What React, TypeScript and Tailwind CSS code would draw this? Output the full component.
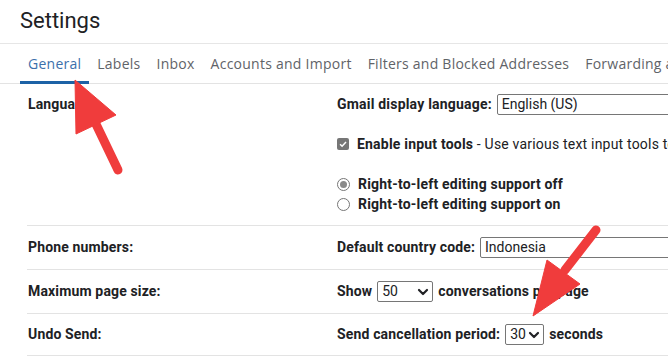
import React from "react";

const tabs = ["General", "Labels", "Inbox", "Accounts and Import", "Filters and Blocked Addresses", "Forwarding and POP/IMAP"];

function Chevron({ className }: { className?: string }) {
	return (
		<svg viewBox="0 0 12 8" className={className} fill="none" stroke="#202124" strokeWidth="2.2" strokeLinecap="round" strokeLinejoin="round">
			<path d="M2 2l4 4 4-4" />
		</svg>
	);
}

function SelectBox({ value, width, chevron = true }: { value: string; width: string; chevron?: boolean }) {
	return (
		<span
			className={
				"inline-flex h-[21px] shrink-0 items-center justify-between rounded-[2px] border border-[#767676] bg-white pl-[4px] pr-[3px] font-normal tracking-normal text-[14px] leading-[19px] text-[#202124] " +
				width
			}
		>
			<span>{value}</span>
			{chevron && <Chevron className="h-[8px] w-[12px]" />}
		</span>
	);
}

function Row({ label, children, height }: { label: string; children: React.ReactNode; height: string }) {
	return (
		<div className={"ml-[27px] flex items-center border-b border-[#e3e3e3] " + height}>
			<div className="w-[310px] shrink-0 pl-[1px] font-bold tracking-[0.15px]">{label}</div>
			<div className="flex items-center gap-[5px] whitespace-nowrap font-bold tracking-[0.15px]">{children}</div>
		</div>
	);
}

export default function App() {
	return (
		<div
			className="relative h-[361px] w-[668px] overflow-hidden bg-white text-[14px] text-[#202124]"
			style={{ fontFamily: "Roboto, 'Liberation Sans', sans-serif" }}
		>
			{/* title */}
			<div className="h-[44px] border-b border-[#e6e6e6] pl-[20px] pt-[7px] text-[22px] leading-[28px] text-[#202124]">Settings</div>

			{/* tabs */}
			<div
				className="flex h-[40px] whitespace-nowrap border-b border-[#e3e3e3] pl-[20px]"
				style={{ fontFamily: "'Open Sans', Roboto, sans-serif" }}
			>
				{tabs.map((t, i) => (
					<div
						key={t}
						className={
							"relative flex h-full items-center px-2 pb-[1px] text-[14px] tracking-[0.25px] " +
							(i === 0 ? "text-[#3c70ab]" : "text-[#5f6368]")
						}
					>
						{t}
						{i === 0 && <span className="absolute bottom-[-1px] left-0 right-0 h-[3px] bg-[#1d62a6]" />}
					</div>
				))}
			</div>

			{/* language */}
			<div className="ml-[27px] flex border-b border-[#e3e3e3] pb-[11px] pt-[10px] leading-[20px]">
				<div className="w-[310px] shrink-0 pl-[1px] font-bold tracking-[0.15px]">Language:</div>
				<div className="flex flex-col whitespace-nowrap tracking-[0.2px]">
					<div className="flex h-[20px] items-center gap-[5px] font-bold">
						Gmail display language:
						<SelectBox value="English (US)" width="w-[300px]" chevron={false} />
					</div>
					<div className="mt-[20px] flex h-[20px] items-center">
						<span className="mr-[8px] flex h-[12px] w-[12px] items-center justify-center rounded-[2px] bg-[#767676]">
							<svg viewBox="0 0 12 12" className="h-[10px] w-[10px]" fill="none" stroke="white" strokeWidth="1.8">
								<path d="M2.5 6.2l2.4 2.4 4.7-5" />
							</svg>
						</span>
						<span className="font-bold">Enable input tools</span>
						<span>&nbsp;- Use various text input tools to type in the language of your choice</span>
					</div>
					<div className="mt-[20px] flex h-[20px] items-center font-bold">
						<span className="mr-[8px] flex h-[13px] w-[13px] items-center justify-center rounded-full border border-[#767676]">
							<span className="h-[7px] w-[7px] rounded-full bg-[#8a8a8a]" />
						</span>
						Right-to-left editing support off
					</div>
					<div className="flex h-[20px] items-center font-bold">
						<span className="mr-[8px] h-[13px] w-[13px] rounded-full border border-[#767676]" />
						Right-to-left editing support on
					</div>
				</div>
			</div>

			<Row label="Phone numbers:" height="h-[44px]">
				Default country code:
				<SelectBox value="Indonesia" width="w-[300px]" chevron={false} />
			</Row>
			<Row label="Maximum page size:" height="h-[44px]">
				Show
				<SelectBox value="50" width="w-[56px]" />
				conversations per page
			</Row>
			<Row label="Undo Send:" height="h-[42px]">
				Send cancellation period:
				<SelectBox value="30" width="w-[39px]" />
				seconds
			</Row>

			{/* red arrows drawn over the screenshot */}
			<svg className="pointer-events-none absolute left-0 top-0" width="668" height="361" viewBox="0 0 668 361">
				<g fill="#f03c3c" stroke="#f03c3c">
					<line x1="95" y1="122" x2="118" y2="170" strokeWidth="9" strokeLinecap="round" />
					<polygon points="75,80 76,134 116,115" strokeWidth="1" strokeLinejoin="round" />
					<line x1="565" y1="270" x2="596" y2="230" strokeWidth="9" strokeLinecap="round" />
					<polygon points="533,316 547,260 580,284" strokeWidth="1" strokeLinejoin="round" />
				</g>
			</svg>
		</div>
	);
}
